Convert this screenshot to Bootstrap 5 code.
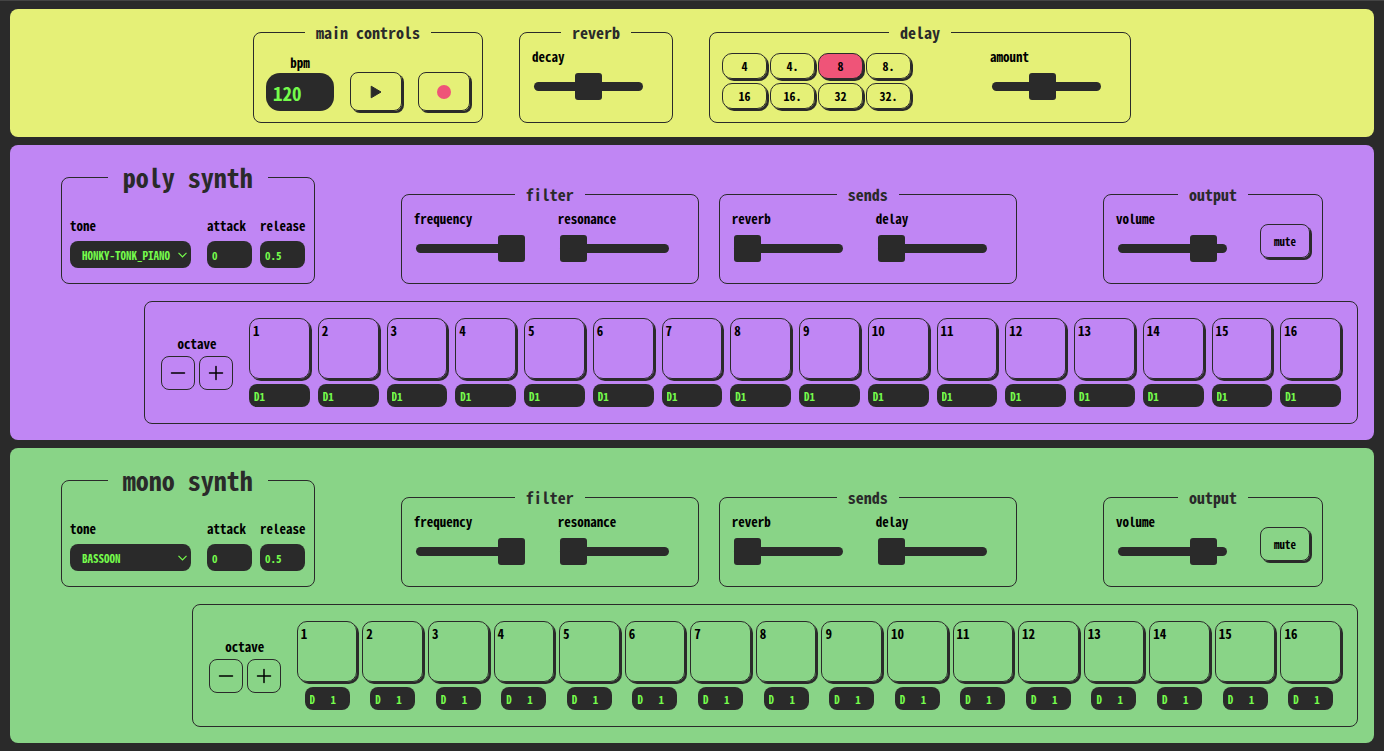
<!DOCTYPE html>
<html lang="en">
<head>
<meta charset="utf-8">
<meta name="viewport" content="width=device-width, initial-scale=1">
<title>Synth sequencer</title>
<link href="https://cdn.jsdelivr.net/npm/bootstrap@5.3.0/dist/css/bootstrap.min.css" rel="stylesheet">
<style>
  :root { --ink: #2a2a2a; --lime: #75fb4c; --pink: #ef5478; }
  body {
    background: var(--ink); color: #000;
    border-top: 1px solid #444;
    font: bold 13px/16px "Noto Sans Mono CJK JP", "Liberation Mono", monospace;
  }
  button, input, select { font: inherit; color: inherit; }
  .rack { padding: 8px 10px 4px; }
  .deck { border-radius: 8px; }
  .deck-main { background: #e5f077; padding: 13px 16px 14px; column-gap: 36px; }
  .deck-poly { background: #c086f4; padding: 16px 0; }
  .deck-mono { background: #89d487; padding: 16px 0; }
  .deck-top { padding: 0 51px; }

  .unit { border: 1px solid var(--ink); border-radius: 8px; padding: 0 12px; }
  .unit legend {
    float: none; width: auto; margin: 0 auto; padding: 0 11px;
    font-size: 16px; line-height: 20px; color: var(--ink);
  }
  .unit-voice { padding: 0 8px 15px; }
  .unit-voice legend { font-size: 26px; line-height: 32px; padding: 0 15px; margin-bottom: 25px; }
  .unit-delay { width: 422px; }
  .unit-pair { gap: 20px; }
  .transport { padding: 13px 0 11px; }
  .transport label { margin-bottom: 2px; }
  .dials { padding: 7px 0 21px; }
  .dial { width: 128px; }
  .dial label { margin-bottom: 8px; }

  input[type=range] {
    appearance: none; -webkit-appearance: none; display: block;
    width: 109px; height: 27px; margin: 0 0 0 2px; background: none;
  }
  input[type=range]::-webkit-slider-runnable-track { height: 9px; border-radius: 5px; background: var(--ink); }
  input[type=range]::-webkit-slider-thumb {
    -webkit-appearance: none; width: 27px; height: 27px; margin-top: -9px;
    border-radius: 3px; background: var(--ink);
  }
  input[type=range]::-moz-range-track { height: 9px; border-radius: 5px; background: var(--ink); }
  input[type=range]::-moz-range-thumb { width: 27px; height: 27px; border: 0; border-radius: 3px; background: var(--ink); }

  .key {
    background: none; border: 1px solid var(--ink); border-radius: 8px; padding: 0;
    box-shadow: 2px 2px 0 var(--ink);
  }
  .key-flat { box-shadow: none; width: 34px; height: 34px; }
  .key-play { width: 52px; height: 39px; }
  .key-mute { width: 50px; height: 34px; font-size: 11px; margin-top: 20px; }
  .divisions { display: grid; grid-template-columns: repeat(4, 45px); gap: 4px 3px; padding-top: 11px; }
  .key-div { height: 26px; font-size: 12px; border-radius: 10px; }
  .key-div.on { background: var(--pink); }

  .lcd { background: var(--ink); color: var(--lime); border: 0; border-radius: 8px; font-size: 11px; min-width: 0; }
  .lcd-bpm { width: 68px; height: 38px; border-radius: 14px; font-size: 19px; padding: 0 7px; }
  .lcd-env { width: 45px; height: 27px; padding: 0 5px; }
  .lcd-tone {
    width: 121px; height: 27px; padding: 0 20px 0 12px;
    appearance: none; -webkit-appearance: none;
    background: var(--ink) url("data:image/svg+xml,%3Csvg xmlns='http://www.w3.org/2000/svg' width='9' height='6' fill='none' stroke='%2375fb4c' stroke-width='1.2'%3E%3Cpath d='M.5.8l4 4 4-4'/%3E%3C/svg%3E") no-repeat right 4px center;
  }
  .voice-field label { margin-bottom: 7px; }

  .track { padding: 16px; margin-top: 17px; margin-right: 16px; }
  .track-poly { width: 89%; }
  .track-mono { width: 85.5%; }
  .steps { display: grid; grid-template-columns: repeat(16, minmax(0, 1fr)); }
  .track-poly .steps { column-gap: 8px; }
  .track-mono .steps { column-gap: 5px; }
  .step { gap: 5px; }
  .pad { height: 61px; border-radius: 10px; padding: 4px 3px; }
  .note { height: 23px; padding: 0 5px; }
  .note-pair { width: 45px; height: 23px; }
  .note-pair input { background: none; color: var(--lime); border: 0; width: 21px; padding: 0 0 0 5px; }
</style>
</head>
<body>
<main class="rack d-flex flex-column gap-2">
  <section class="deck deck-main d-flex flex-wrap justify-content-center" aria-label="Main">
    <fieldset class="unit">
      <legend>main controls</legend>
      <div class="d-flex align-items-end gap-3 transport">
        <div class="d-flex flex-column align-items-center">
          <label for="bpm">bpm</label>
          <input id="bpm" class="lcd lcd-bpm" type="text" inputmode="numeric" value="120">
        </div>
        <button class="key key-play d-flex align-items-center justify-content-center" type="button" aria-label="Play">
          <svg width="12" height="14" viewBox="0 0 12 14"><path d="M1.2 1.2v11.6L11 7z" fill="#2a2a2a" stroke="#2a2a2a" stroke-linejoin="round"/></svg>
        </button>
        <button class="key key-play d-flex align-items-center justify-content-center" type="button" aria-label="Record">
          <svg width="14" height="14" viewBox="0 0 14 14"><circle cx="7" cy="7" r="7" fill="#ef5478"/></svg>
        </button>
      </div>
    </fieldset>
    <fieldset class="unit">
      <legend>reverb</legend>
      <div class="dials">
        <div class="dial"><label class="d-block" for="decay">decay</label><input id="decay" type="range" value="50"></div>
      </div>
    </fieldset>
    <fieldset class="unit unit-delay">
      <legend>delay</legend>
      <div class="d-flex justify-content-between">
        <div class="divisions align-content-start">
          <button class="key key-div" type="button">4</button>
          <button class="key key-div" type="button">4.</button>
          <button class="key key-div on" type="button" aria-pressed="true">8</button>
          <button class="key key-div" type="button">8.</button>
          <button class="key key-div" type="button">16</button>
          <button class="key key-div" type="button">16.</button>
          <button class="key key-div" type="button">32</button>
          <button class="key key-div" type="button">32.</button>
        </div>
        <div class="dials">
          <div class="dial"><label class="d-block" for="amount">amount</label><input id="amount" type="range" value="45"></div>
        </div>
      </div>
    </fieldset>
  </section>

  <section class="deck deck-poly" data-synth="poly" data-tone="HONKY-TONK_PIANO"></section>
  <section class="deck deck-mono" data-synth="mono" data-tone="BASSOON"></section>
</main>

<script src="https://cdn.jsdelivr.net/npm/bootstrap@5.3.0/dist/js/bootstrap.bundle.min.js"></script>
<script>
  const dial = (synth, name, value) => `
    <div class="dial"><label class="d-block" for="${synth}-${name}">${name.replace('send-', '')}</label>
    <input id="${synth}-${name}" type="range" value="${value}"></div>`;

  const note = (synth, n) => synth === 'poly'
    ? `<input class="lcd note w-100" type="text" value="D1" aria-label="Step ${n} note">`
    : `<div class="lcd note-pair d-flex"><input type="text" value="D" aria-label="Step ${n} note"><input type="text" value="1" aria-label="Step ${n} octave"></div>`;

  const step = (synth, n) => `
    <div class="step d-flex flex-column align-items-center">
      <button class="key pad w-100 d-flex align-items-start" type="button">${n}</button>${note(synth, n)}
    </div>`;

  const octaveKey = (label, path) => `
    <button class="key key-flat d-flex align-items-center justify-content-center" type="button" aria-label="${label}">
      <svg width="16" height="16" viewBox="0 0 16 16" fill="none" stroke="#000" stroke-width="1.5" stroke-linecap="round"><path d="${path}"/></svg>
    </button>`;

  for (const deck of document.querySelectorAll('[data-synth]')) {
    const { synth, tone } = deck.dataset;
    deck.innerHTML = `
      <div class="deck-top d-flex justify-content-between align-items-end">
        <fieldset class="unit unit-voice">
          <legend>${synth} synth</legend>
          <div class="d-flex voice-field">
            <div class="me-3"><label class="d-block" for="${synth}-tone">tone</label>
              <select id="${synth}-tone" class="lcd lcd-tone d-block"><option>${tone}</option></select></div>
            <div class="me-2"><label class="d-block" for="${synth}-attack">attack</label>
              <input id="${synth}-attack" class="lcd lcd-env d-block" type="text" value="0"></div>
            <div><label class="d-block" for="${synth}-release">release</label>
              <input id="${synth}-release" class="lcd lcd-env d-block" type="text" value="0.5"></div>
          </div>
        </fieldset>
        <div class="d-flex unit-pair">
          <fieldset class="unit"><legend>filter</legend>
            <div class="dials d-flex gap-3">${dial(synth, 'frequency', 100)}${dial(synth, 'resonance', 0)}</div></fieldset>
          <fieldset class="unit"><legend>sends</legend>
            <div class="dials d-flex gap-3">${dial(synth, 'send-reverb', 0)}${dial(synth, 'send-delay', 0)}</div></fieldset>
        </div>
        <fieldset class="unit"><legend>output</legend>
          <div class="d-flex gap-3"><div class="dials">${dial(synth, 'volume', 88)}</div>
            <button class="key key-mute" type="button">mute</button></div></fieldset>
      </div>
      <div class="unit track track-${synth} ms-auto d-flex align-items-center gap-3">
        <div class="text-center">
          <div>octave</div>
          <div class="d-flex gap-1 mt-1">${octaveKey('Octave down', 'M1.5 8h13')}${octaveKey('Octave up', 'M1.5 8h13M8 1.5v13')}</div>
        </div>
        <div class="steps flex-grow-1">${Array.from({ length: 16 }, (_, i) => step(synth, i + 1)).join('')}</div>
      </div>`;
  }
</script>
</body>
</html>
